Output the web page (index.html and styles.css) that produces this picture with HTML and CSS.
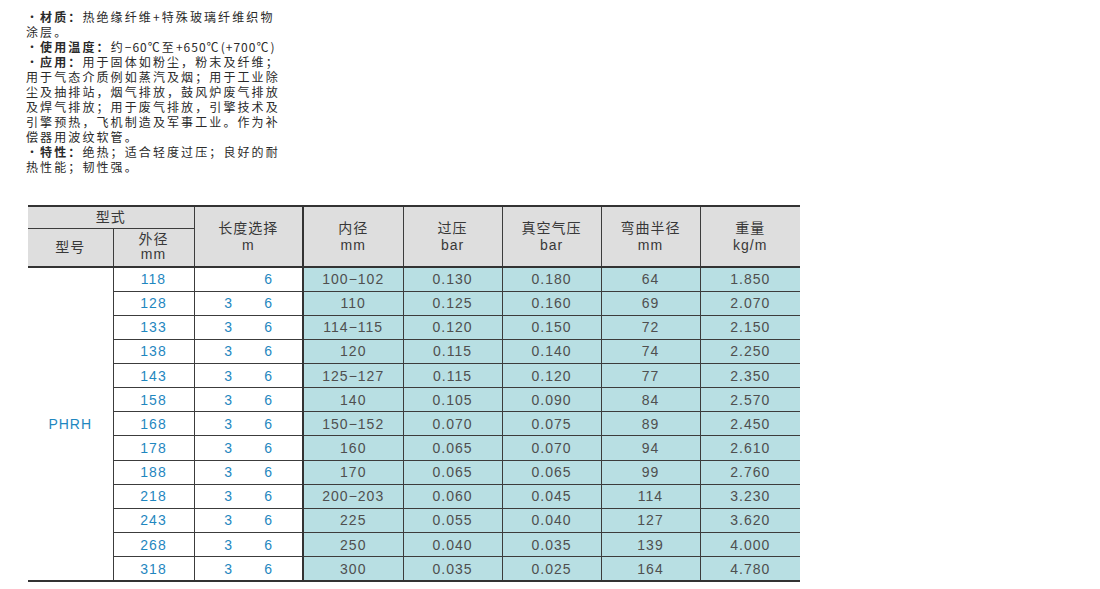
FILE: index.html
```html
<!DOCTYPE html>
<html lang="zh">
<head>
<meta charset="utf-8">
<title>PHRH</title>
<link rel="stylesheet" href="styles.css">
</head>
<body>
<div class="page">
  <div class="intro">
    <p>・<b>材质：</b>热绝缘纤维+特殊玻璃纤维织物<br>涂层。</p>
    <p>・<b>使用温度：</b>约<span class="lat">−60</span>℃至<span class="lat">+650</span>℃<span class="lat">(+700</span>℃<span class="lat">)</span></p>
    <p>・<b>应用：</b>用于固体如粉尘，粉末及纤维；<br>用于气态介质例如蒸汽及烟；用于工业除<br>尘及抽排站，烟气排放，鼓风炉废气排放<br>及焊气排放；用于废气排放，引擎技术及<br>引擎预热，飞机制造及军事工业。作为补<br>偿器用波纹软管。</p>
    <p>・<b>特性：</b>绝热；适合轻度过压；良好的耐<br>热性能；韧性强。</p>
  </div>

  <table class="spec">
    <colgroup>
      <col class="c1"><col class="c2"><col class="c3"><col class="c4"><col class="c5"><col class="c6"><col class="c7"><col class="c8">
    </colgroup>
    <thead>
      <tr class="h1">
        <th colspan="2" class="first">型式</th>
        <th rowspan="2" class="tall">长度选择<br>m</th>
        <th rowspan="2" class="thick tall">内径<br>mm</th>
        <th rowspan="2" class="tall">过压<br>bar</th>
        <th rowspan="2" class="tall">真空气压<br>bar</th>
        <th rowspan="2" class="tall">弯曲半径<br>mm</th>
        <th rowspan="2" class="last tall">重量<br>kg/m</th>
      </tr>
      <tr class="h2">
        <th class="first">型号</th>
        <th>外径<br>mm</th>
      </tr>
    </thead>
    <tbody>
      <tr><td rowspan="13" class="model">PHRH</td><td class="od">118</td><td class="len"><span></span><span>6</span></td><td class="v thick">100−102</td><td class="v">0.130</td><td class="v">0.180</td><td class="v">64</td><td class="v last">1.850</td></tr>
      <tr><td class="od">128</td><td class="len"><span>3</span><span>6</span></td><td class="v thick">110</td><td class="v">0.125</td><td class="v">0.160</td><td class="v">69</td><td class="v last">2.070</td></tr>
      <tr><td class="od">133</td><td class="len"><span>3</span><span>6</span></td><td class="v thick">114−115</td><td class="v">0.120</td><td class="v">0.150</td><td class="v">72</td><td class="v last">2.150</td></tr>
      <tr><td class="od">138</td><td class="len"><span>3</span><span>6</span></td><td class="v thick">120</td><td class="v">0.115</td><td class="v">0.140</td><td class="v">74</td><td class="v last">2.250</td></tr>
      <tr><td class="od">143</td><td class="len"><span>3</span><span>6</span></td><td class="v thick">125−127</td><td class="v">0.115</td><td class="v">0.120</td><td class="v">77</td><td class="v last">2.350</td></tr>
      <tr><td class="od">158</td><td class="len"><span>3</span><span>6</span></td><td class="v thick">140</td><td class="v">0.105</td><td class="v">0.090</td><td class="v">84</td><td class="v last">2.570</td></tr>
      <tr><td class="od">168</td><td class="len"><span>3</span><span>6</span></td><td class="v thick">150−152</td><td class="v">0.070</td><td class="v">0.075</td><td class="v">89</td><td class="v last">2.450</td></tr>
      <tr><td class="od">178</td><td class="len"><span>3</span><span>6</span></td><td class="v thick">160</td><td class="v">0.065</td><td class="v">0.070</td><td class="v">94</td><td class="v last">2.610</td></tr>
      <tr><td class="od">188</td><td class="len"><span>3</span><span>6</span></td><td class="v thick">170</td><td class="v">0.065</td><td class="v">0.065</td><td class="v">99</td><td class="v last">2.760</td></tr>
      <tr><td class="od">218</td><td class="len"><span>3</span><span>6</span></td><td class="v thick">200−203</td><td class="v">0.060</td><td class="v">0.045</td><td class="v">114</td><td class="v last">3.230</td></tr>
      <tr><td class="od">243</td><td class="len"><span>3</span><span>6</span></td><td class="v thick">225</td><td class="v">0.055</td><td class="v">0.040</td><td class="v">127</td><td class="v last">3.620</td></tr>
      <tr><td class="od">268</td><td class="len"><span>3</span><span>6</span></td><td class="v thick">250</td><td class="v">0.040</td><td class="v">0.035</td><td class="v">139</td><td class="v last">4.000</td></tr>
      <tr class="end"><td class="od">318</td><td class="len"><span>3</span><span>6</span></td><td class="v thick">300</td><td class="v">0.035</td><td class="v">0.025</td><td class="v">164</td><td class="v last">4.780</td></tr>
    </tbody>
  </table>
</div>
</body>
</html>
```

FILE: styles.css
```css
* { box-sizing: border-box; }

body {
  margin: 0;
  background: #ffffff;
  font-family: "Liberation Sans", "Noto Sans CJK SC", sans-serif;
  color: #333333;
}

.page {
  padding: 9px 0 0 26px;
}

.intro {
  font-family: "Noto Sans CJK SC", sans-serif;
  font-size: 12px;
  line-height: 15px;
  letter-spacing: 2.1px;
  color: #2a2a2a;
  white-space: nowrap;
}

.intro p { margin: 0; }
.intro b { font-weight: 700; }
.intro .lat { letter-spacing: 1px; }

.spec {
  margin: 31px 0 0 2px;
  width: 772px;
  table-layout: fixed;
  border-collapse: collapse;
  font-size: 14px;
  letter-spacing: 1px;
}

.c1 { width: 85px; }
.c2 { width: 81px; }
.c3 { width: 109px; }
.c4 { width: 100px; }
.c5 { width: 99px; }
.c6 { width: 99px; }
.c7 { width: 99px; }
.c8 { width: 100px; }

.spec th,
.spec td {
  border: 1px solid #3c3c3c;
  padding: 0;
  text-align: center;
  vertical-align: middle;
}

.spec th {
  background: #dedede;
  font-weight: 400;
  line-height: 15px;
  color: #383838;
}

.spec th.tall { line-height: 17px; }

.spec .h1 th {
  border-top: 2px solid #333333;
  height: 22px;
}

.spec .h2 th { height: 39px; }

.spec .h2 th,
.spec .h1 th[rowspan] { border-bottom: 2px solid #333333; }

.spec .first { border-left: none; }
.spec .last { border-right: none; }
.spec .thick { border-left: 2px solid #333333; }

.spec tbody tr { height: 24.15px; }

.spec td { line-height: 16px; }

.spec .model {
  border-left: none;
  border-bottom: 2px solid #333333;
  background: #ffffff;
  color: #1f87c0;
}

.spec .od {
  color: #1f87c0;
  background: #ffffff;
}

.spec .len {
  background: #ffffff;
  color: #1f87c0;
  letter-spacing: 0;
}

.spec .len span {
  display: inline-block;
  width: 40px;
  text-align: center;
}

.spec .v {
  background: #b8dfe3;
  color: #4f4f4f;
}

.spec .end td { border-bottom: 2px solid #333333; }
```
